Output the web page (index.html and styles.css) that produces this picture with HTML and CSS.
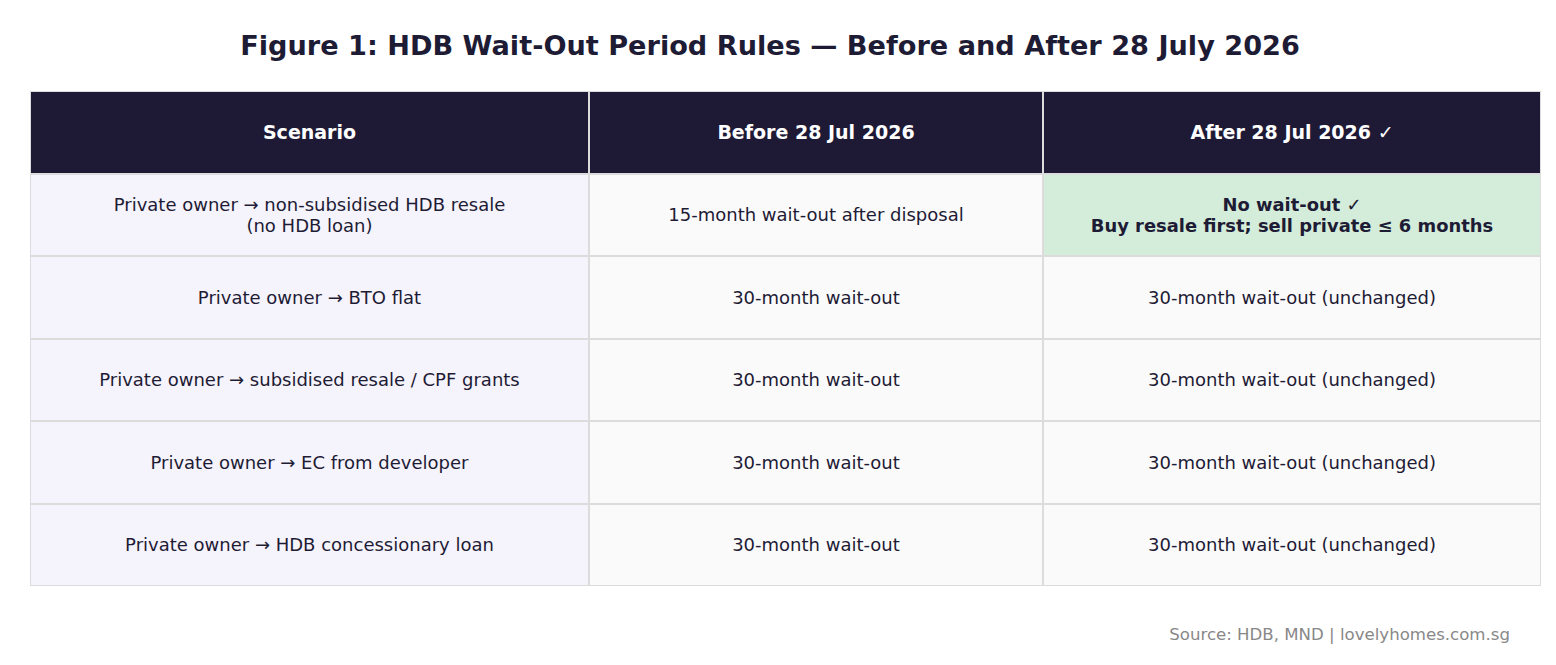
FILE: index.html
```html
<!DOCTYPE html>
<html>
<head>
<meta charset="utf-8">
<link rel="stylesheet" href="styles.css">
</head>
<body>
<div class="page">
  <h1 class="title">Figure 1: HDB Wait-Out Period Rules — Before and After 28 July 2026</h1>
  <div class="table">
    <div class="cell head">Scenario</div>
    <div class="cell head">Before 28 Jul 2026</div>
    <div class="cell head">After 28 Jul 2026 ✓</div>

    <div class="cell first">Private owner → non-subsidised HDB resale<br>(no HDB loan)</div>
    <div class="cell">15-month wait-out after disposal</div>
    <div class="cell green">No wait-out ✓<br>Buy resale first; sell private ≤ 6 months</div>

    <div class="cell first">Private owner → BTO flat</div>
    <div class="cell">30-month wait-out</div>
    <div class="cell">30-month wait-out (unchanged)</div>

    <div class="cell first">Private owner → subsidised resale / CPF grants</div>
    <div class="cell">30-month wait-out</div>
    <div class="cell">30-month wait-out (unchanged)</div>

    <div class="cell first">Private owner → EC from developer</div>
    <div class="cell">30-month wait-out</div>
    <div class="cell">30-month wait-out (unchanged)</div>

    <div class="cell first">Private owner → HDB concessionary loan</div>
    <div class="cell">30-month wait-out</div>
    <div class="cell">30-month wait-out (unchanged)</div>
  </div>
  <div class="source">Source: HDB, MND | lovelyhomes.com.sg</div>
</div>
</body>
</html>
```

FILE: styles.css
```css
html, body {
  margin: 0;
  padding: 0;
  background: #ffffff;
}
body {
  font-family: "DejaVu Sans", sans-serif;
  color: #1e1b35;
  width: 1556px;
  height: 665px;
  overflow: hidden;
}
.page {
  display: flex;
  flex-direction: column;
}
.title {
  margin: 31px 0 0 0;
  height: 30px;
  line-height: 30px;
  font-size: 27.15px;
  font-weight: bold;
  text-align: center;
  color: #1e1b35;
  padding-right: 16px;
}
.table {
  margin: 30px 0 0 30px;
  width: 1509px;
  display: grid;
  grid-template-columns: 557px 452px 496px;
  grid-template-rows: repeat(6, 80.5px);
  gap: 2px;
  border: 1px solid #dcdcdc;
  background: #dcdcdc;
}
.cell {
  display: flex;
  align-items: center;
  justify-content: center;
  text-align: center;
  font-size: 18px;
  line-height: 21px;
  background: #fafafa;
  color: #1e1b35;
}
.cell.first {
  background: #f5f3fb;
}
.cell.head {
  background: #1e1a36;
  color: #ffffff;
  font-weight: bold;
  font-size: 19px;
}
.cell.green {
  background: #d4edda;
  font-weight: bold;
  font-size: 17.9px;
}
.source {
  margin-top: 39px;
  width: 1510px;
  text-align: right;
  font-size: 16.6px;
  line-height: 20px;
  color: #888888;
}
```
